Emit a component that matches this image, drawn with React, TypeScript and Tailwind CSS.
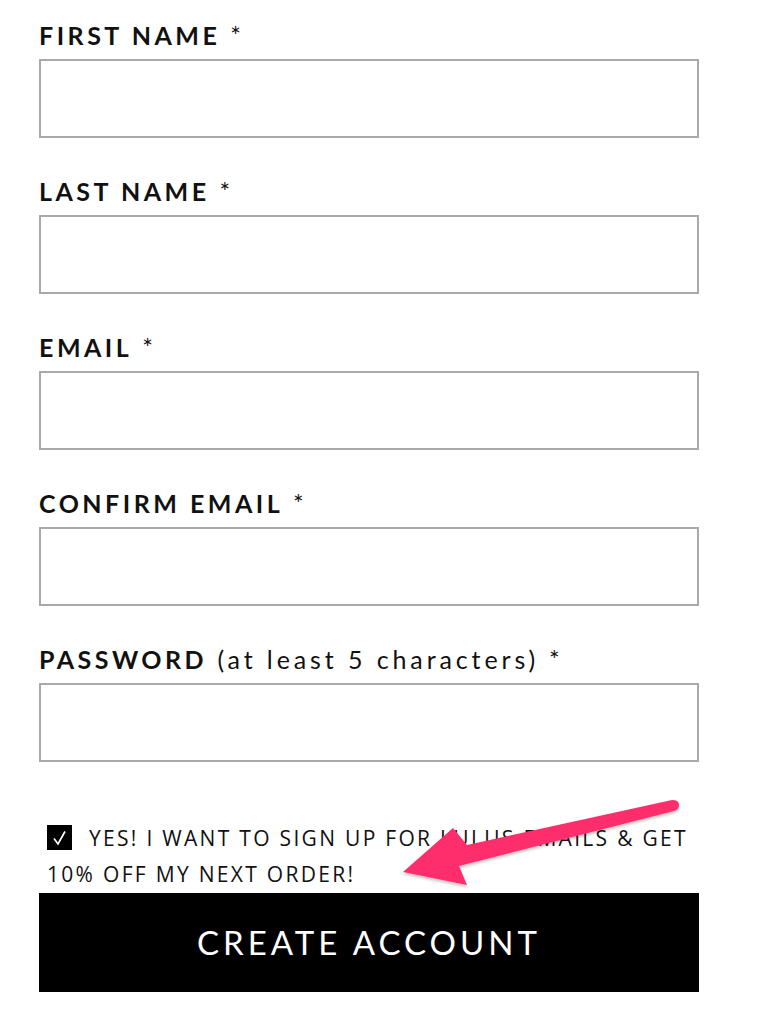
import React from "react";

const Field = ({ label, extra }: { label: string; extra?: string }) => (
  <div className="flex flex-col">
    <label className="text-[25px] leading-[32px] font-bold tracking-[3.5px] text-[#111] mb-[8px]">
      {label}
      {extra ? <span className="font-normal tracking-[3.9px]"> {extra}</span> : null}
      <span className="font-normal"> *</span>
    </label>
    <input className="h-[79px] w-[660px] border-2 border-[#a9a9a9] bg-white outline-none" />
  </div>
);

export default function App() {
  return (
    <div
      className="relative w-[768px] h-[1022px] bg-white overflow-hidden"
      style={{ fontFamily: "Lato, 'Open Sans', sans-serif" }}
    >
      <div className="pl-[39px] pt-[19px] flex flex-col gap-[37px]">
        <Field label="FIRST NAME" />
        <Field label="LAST NAME" />
        <Field label="EMAIL" />
        <Field label="CONFIRM EMAIL" />
        <Field label="PASSWORD" extra="(at least 5 characters)" />
      </div>
      <div className="pl-[39px] mt-[58px]">
        <div
          className="pl-[8px] text-[21px] leading-[36px] text-[#111] tracking-[2.3px]"
          style={{ fontFamily: "'Open Sans', Lato, sans-serif" }}
        >
          <span className="inline-block w-[25px] h-[25px] bg-black align-[-4px] mr-[17px]">
            <svg width="25" height="25" viewBox="0 0 25 25" className="block">
              <path d="M7 13.5 L11 19 L18 6.5" fill="none" stroke="#fff" strokeWidth="1.7" />
            </svg>
          </span>
          YES! I WANT TO SIGN UP FOR LULUS EMAILS &amp; GET
          <br />
          10% OFF MY NEXT ORDER!
        </div>
        <button className="mt-[1px] w-[660px] h-[99px] bg-black text-white text-[33px] tracking-[4px] flex items-center justify-center">
          CREATE ACCOUNT
        </button>
      </div>
      <svg
        className="absolute left-0 top-0 pointer-events-none"
        width="768"
        height="1022"
        viewBox="0 0 768 1022"
      >
        <defs>
          <filter id="sh" x="-10%" y="-10%" width="120%" height="140%">
            <feDropShadow dx="0" dy="2" stdDeviation="1.5" floodColor="#000" floodOpacity="0.25" />
          </filter>
        </defs>
        <path
          d="M403 872 L453 828 L467 845 L672 800 Q679 800 679 805 Q679 810 674 811 L459 866 L467 885 Z"
          fill="#fe2f6d"
          filter="url(#sh)"
        />
      </svg>
    </div>
  );
}
